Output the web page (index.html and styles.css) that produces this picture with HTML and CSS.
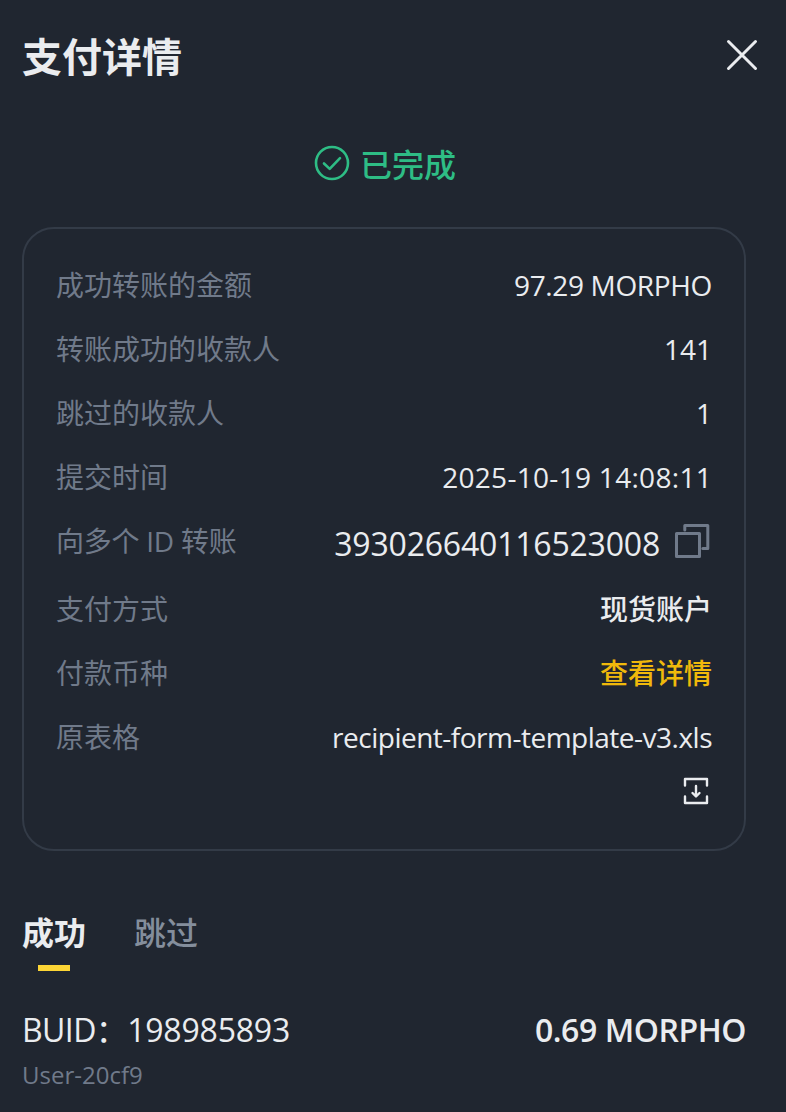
FILE: index.html
```html
<!DOCTYPE html>
<html lang="zh-CN">
<head>
  <meta charset="UTF-8" />
  <meta name="viewport" content="width=device-width, initial-scale=1.0"/>
  <title>支付详情</title>
  <link rel="stylesheet" href="styles.css">
</head>
<body>
  <header>
    <h1>支付详情</h1>
    <button class="close-btn" aria-label="关闭">
      <svg width="34" height="34" viewBox="0 0 34 34" fill="none" stroke="currentColor" stroke-width="3" stroke-linecap="round">
        <path d="M3.5 3.5l27 27M30.5 3.5l-27 27"/>
      </svg>
    </button>
  </header>

  <div class="status">
    <svg width="36" height="36" viewBox="0 0 36 36" fill="none" stroke="currentColor" stroke-width="2.6" stroke-linecap="round" stroke-linejoin="round">
      <circle cx="18" cy="18" r="16"/>
      <path d="M10 18.5l5.7 5.4L26 13.2"/>
    </svg>
    <span>已完成</span>
  </div>

  <div class="detail-card">
    <div class="row">
      <span class="label">成功转账的金额</span>
      <span class="value amount">97.29 MORPHO</span>
    </div>
    <div class="row">
      <span class="label">转账成功的收款人</span>
      <span class="value">141</span>
    </div>
    <div class="row">
      <span class="label">跳过的收款人</span>
      <span class="value">1</span>
    </div>
    <div class="row">
      <span class="label">提交时间</span>
      <span class="value time">2025-10-19 14:08:11</span>
    </div>
    <div class="row id-row">
      <span class="label">向多个 ID 转账</span>
      <span class="value id-value">
        <span>393026640116523008</span>
        <svg width="36" height="36" viewBox="0 0 36 36" fill="none" stroke="currentColor" stroke-width="3" stroke-linejoin="round" stroke-linecap="round">
          <path d="M2.5 10.5h23v23h-23z"/>
          <path d="M10.8 7V2.5h23v23h-5"/>
        </svg>
      </span>
    </div>
    <div class="row">
      <span class="label">支付方式</span>
      <span class="value">现货账户</span>
    </div>
    <div class="row">
      <span class="label">付款币种</span>
      <a class="value link">查看详情</a>
    </div>
    <div class="row file-row">
      <span class="label">原表格</span>
      <span class="value file">
        <span class="file-name">recipient-form-template-v3.xls</span>
        <svg width="26" height="28" viewBox="0 0 26 28" fill="none" stroke="currentColor" stroke-width="2.4" stroke-linejoin="round" stroke-linecap="round">
          <path d="M2 8.5V2h22v6.5M2 19.5V26h22v-6.5"/>
          <path d="M13 9v10M9.5 16l3.5 3.5 3.5-3.5"/>
        </svg>
      </span>
    </div>
  </div>

  <nav>
    <a class="tab active">成功</a>
    <a class="tab">跳过</a>
  </nav>

  <div class="record">
    <div>
      <p class="buid">BUID：<span>198985893</span></p>
      <p class="user">User-20cf9</p>
    </div>
    <p class="record-amount">0.69 MORPHO</p>
  </div>
</body>
</html>
```
FILE: styles.css
```css
:root {
  --body-bg: #202630;
  --text-color: #eaecef;
  --label-color: #707a8a;
  --border-color: #333b47;
  --success-color: #2ebd85;
  --link-color: #f0b90b;
  --accent-color: #fcd535;
}

* {
  margin: 0;
  padding: 0;
  box-sizing: border-box;
}
body {
  font-family: 'Open Sans', 'Noto Sans CJK SC', sans-serif;
  background: var(--body-bg);
  color: var(--text-color);
  height: 1112px;
  padding: 33px 40px 0 22px;
  overflow: hidden;
}
svg {
  display: block;
  flex-shrink: 0;
}

header {
  display: flex;
  justify-content: space-between;
  height: 111px;
}
h1 {
  font-size: 40px;
  font-weight: 700;
  line-height: 48px;
}
.close-btn {
  width: 34px;
  height: 34px;
  margin: 5px -13px 0 0;
  background: none;
  border: none;
  color: inherit;
  cursor: pointer;
}

.status {
  display: flex;
  justify-content: center;
  gap: 10px;
  height: 83px;
  padding: 1px 0 0 2px;
  color: var(--success-color);
  font-size: 32px;
  font-weight: 500;
  line-height: 40px;
}

.detail-card {
  display: flex;
  flex-direction: column;
  gap: 20px;
  height: 624px;
  padding: 34px 32px 30px;
  border: 2px solid var(--border-color);
  border-radius: 32px;
}
.row {
  display: flex;
  justify-content: space-between;
  height: 44px;
  font-size: 28px;
  line-height: 44px;
}
.label {
  color: var(--label-color);
}
.value {
  font-weight: 500;
}
.amount {
  letter-spacing: -0.35px;
}
.time {
  letter-spacing: 0.3px;
}
.id-row {
  height: 48px;
}
.id-row .label {
  letter-spacing: -0.25px;
}
.id-value {
  display: flex;
  gap: 14px;
  margin-right: 2px;
  font-size: 32px;
  letter-spacing: -0.2px;
  line-height: 50px;
}
.id-value svg {
  margin-top: 4px;
  color: var(--label-color);
}
.link {
  color: var(--link-color);
}
.file-row {
  height: auto;
}
.file {
  display: flex;
  flex-direction: column;
  align-items: flex-end;
  gap: 18px;
}
.file-name {
  letter-spacing: -0.5px;
}
.file svg {
  margin-right: 3px;
}

nav {
  display: flex;
  gap: 48px;
  margin-top: 58px;
}
.tab {
  display: flex;
  flex-direction: column;
  align-items: center;
  height: 62px;
  color: #848e9c;
  font-size: 32px;
  font-weight: 500;
  line-height: 48px;
}
.tab.active {
  color: var(--text-color);
  font-weight: 700;
}
.tab.active::after {
  content: '';
  width: 32px;
  height: 6px;
  margin-top: 8px;
  background: var(--accent-color);
}

.record {
  display: flex;
  justify-content: space-between;
  margin-top: 35px;
  font-size: 32px;
  line-height: 48px;
}
.buid {
  letter-spacing: -0.6px;
}
.buid span {
  letter-spacing: -0.2px;
}
.user {
  color: var(--label-color);
  font-size: 24px;
  line-height: 42px;
}
.record-amount {
  font-weight: 600;
  letter-spacing: -0.45px;
}
```
